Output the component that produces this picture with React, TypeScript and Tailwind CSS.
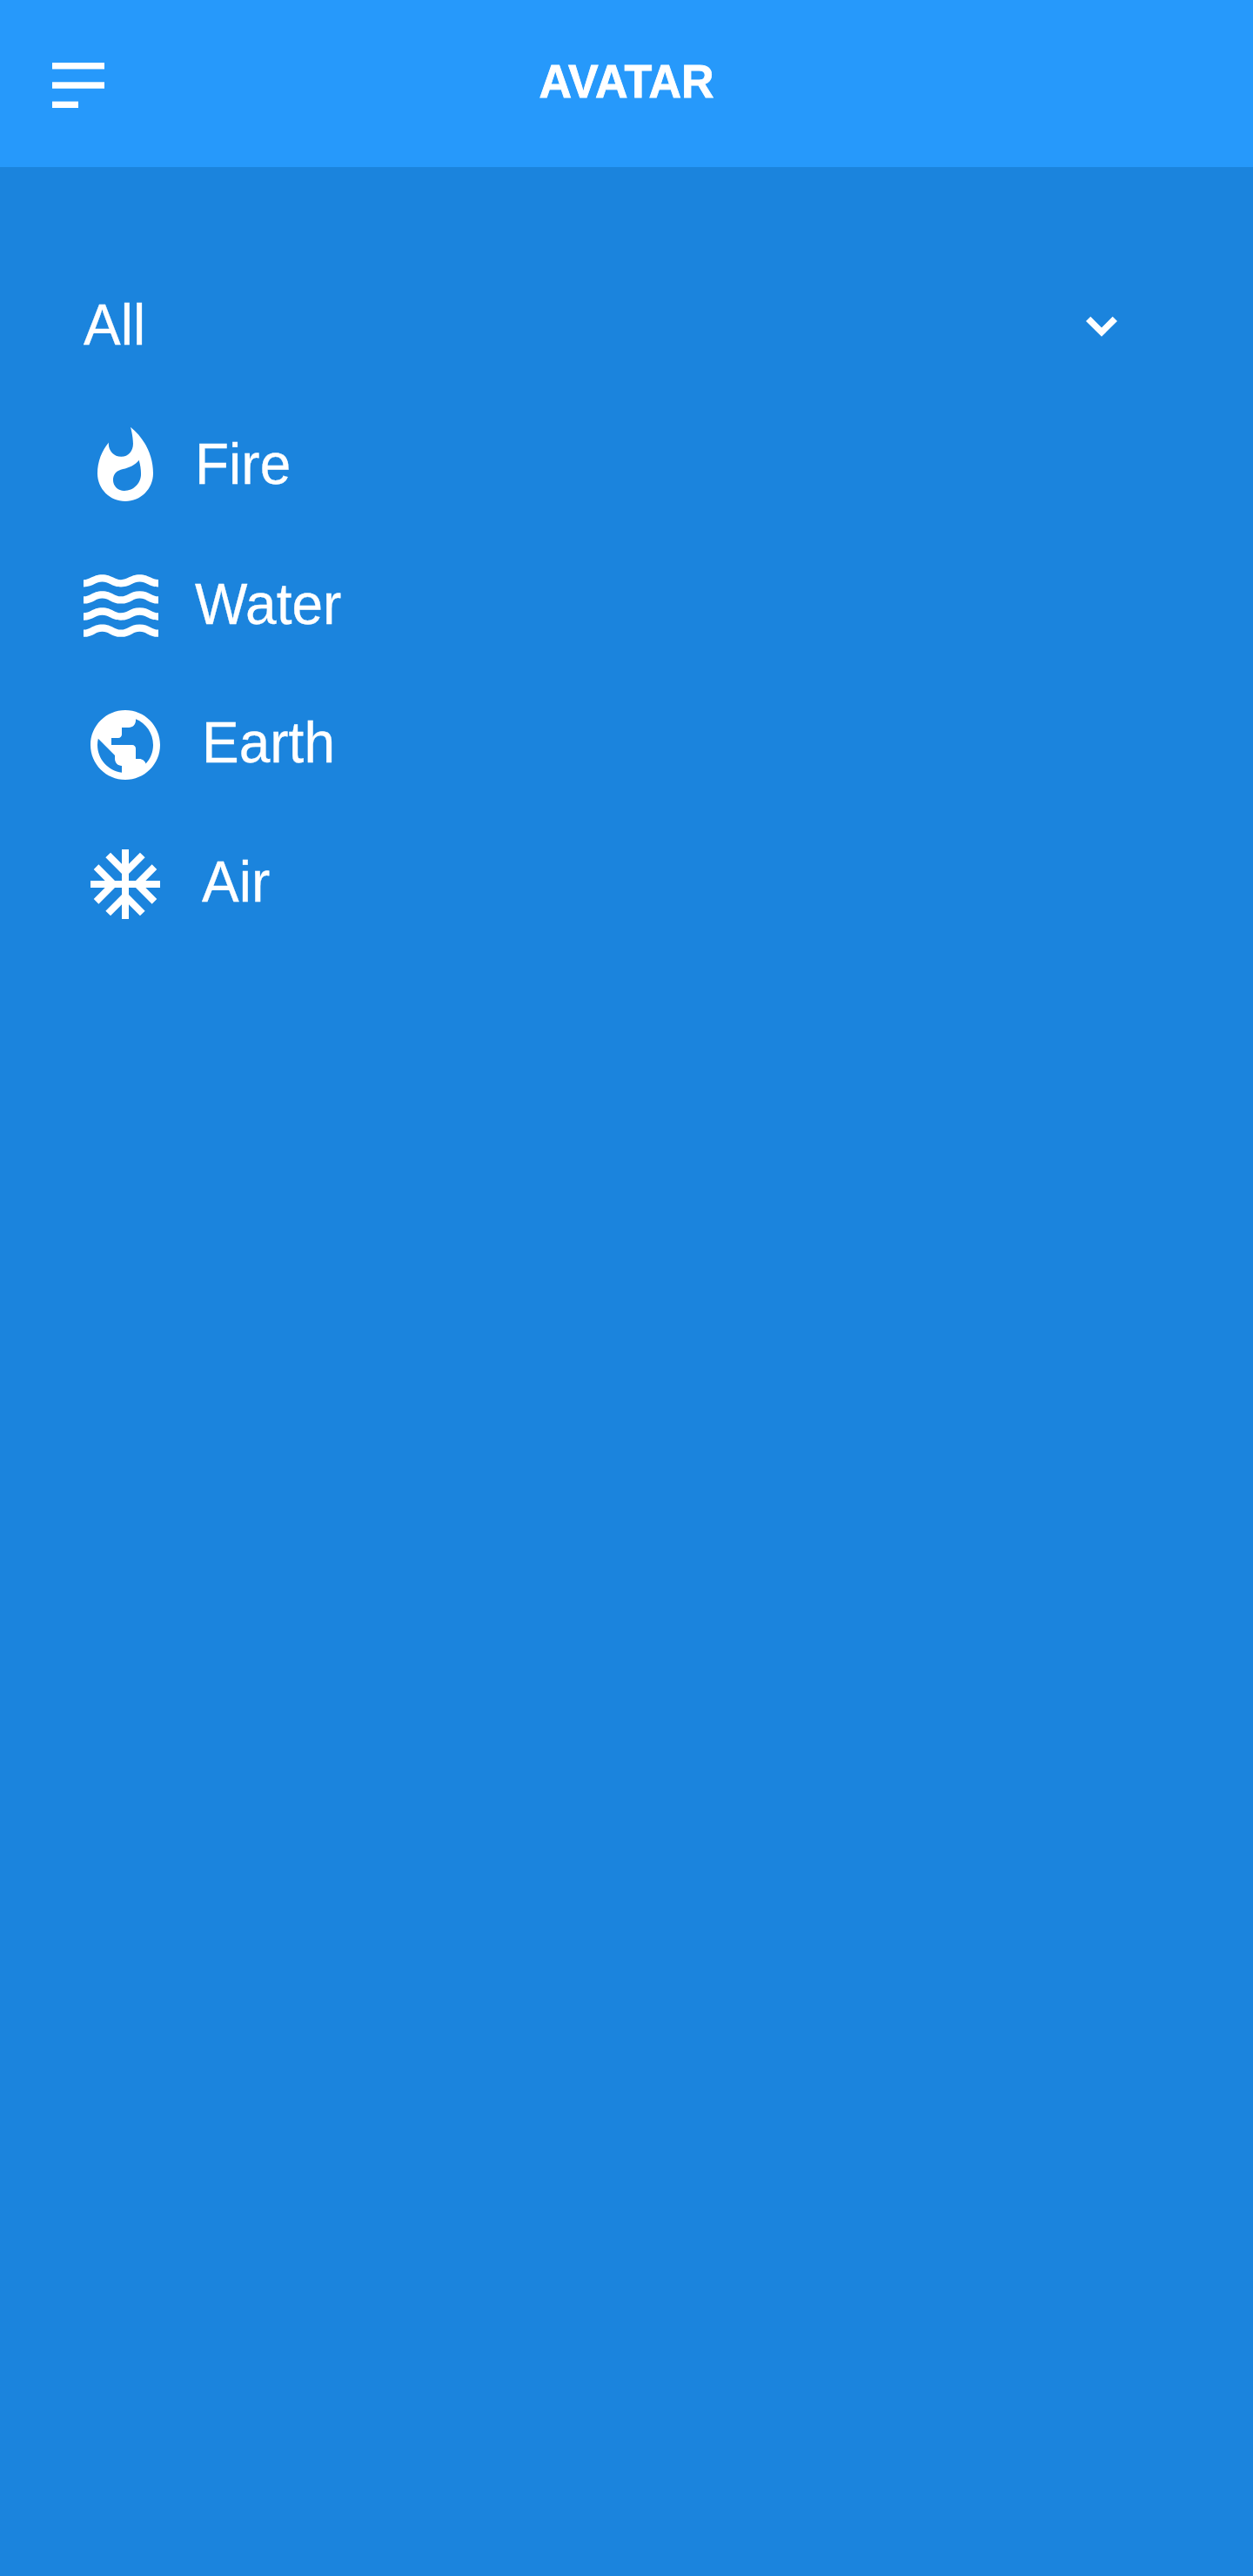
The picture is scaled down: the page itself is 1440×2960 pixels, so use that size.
import type { ReactNode } from 'react';
import { MdAcUnit, MdPublic, MdWaves, MdWhatshot } from 'react-icons/md';

function MenuIcon() {
  return (
    <svg className="h-[52px] w-[60px]" viewBox="0 0 60 52" fill="currentColor">
      <rect width="60" height="7.43" />
      <rect y="22.29" width="60" height="7.43" />
      <rect y="44.57" width="30" height="7.43" />
    </svg>
  );
}

function ChevronIcon() {
  return (
    <svg className="h-[24px] w-[36px]" viewBox="0 0 36 24" fill="currentColor">
      <path d="M5.3 0.8 18 13.4 30.7 0.8 36 6.1 18 23.8 0 6.1z" />
    </svg>
  );
}

type ItemProps = { icon: ReactNode; label: string; gap: string; lift?: string };

function Item({ icon, label, gap, lift = 'mb-1' }: ItemProps) {
  return (
    <li className={`flex h-[160px] items-center ${gap}`}>
      {icon}
      <span className={`origin-[0_58px] scale-y-[1.04] ${lift}`}>{label}</span>
    </li>
  );
}

export default function App() {
  return (
    <div className="flex h-[2960px] w-[1440px] flex-col bg-[#1b84dd] font-['Liberation_Sans',Arial,sans-serif] text-white">
      <header className="grid h-[192px] grid-cols-[1fr_auto_1fr] items-center bg-[#2699fb] px-[60px]">
        <button className="mt-1 w-[60px]" aria-label="Menu">
          <MenuIcon />
        </button>
        <h1 className="mb-1 origin-[50%_48px] scale-y-[1.03] text-[52px] leading-[60px] font-bold [-webkit-text-stroke:0.8px_white]">
          AVATAR
        </h1>
      </header>
      <main className="px-24 pt-[102px] text-[64px] leading-[72px] [-webkit-text-stroke:0.3px_white]">
        <div className="flex h-[162px] items-center justify-between pr-[60px]">
          <span className="mb-0.5 origin-[0_58px] scale-y-[1.04]">All</span>
          <ChevronIcon />
        </div>
        <ul>
          <Item gap="gap-8" icon={<MdWhatshot className="size-24" />} label="Fire" />
          <Item
            gap="gap-[42px]"
            lift="mb-0.5"
            icon={<MdWaves viewBox="2 2 20 20" className="size-[86px]" />}
            label="Water"
          />
          <Item gap="gap-10" icon={<MdPublic className="size-24" />} label="Earth" />
          <Item gap="gap-10" icon={<MdAcUnit className="size-24" />} label="Air" />
        </ul>
      </main>
    </div>
  );
}
